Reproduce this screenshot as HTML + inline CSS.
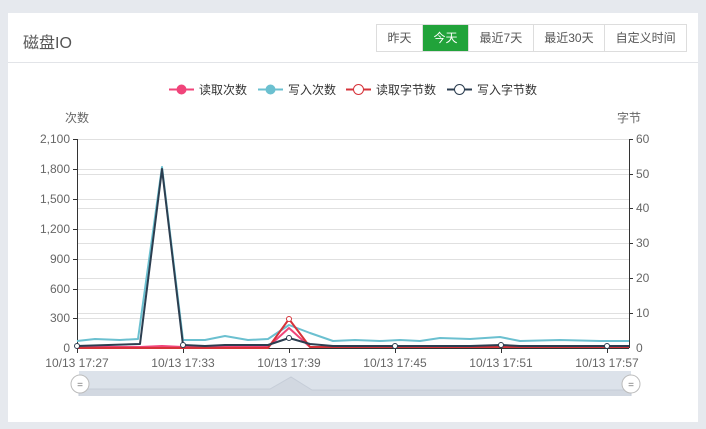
<!DOCTYPE html><html><head><meta charset="utf-8"><style>
body{margin:0;width:706px;height:429px;background:#e6e9ee;font-family:"Liberation Sans","Noto Sans CJK SC",sans-serif;position:relative;overflow:hidden}
.card{position:absolute;left:8px;top:13px;width:690px;height:409px;background:#fff}
.title{position:absolute;left:15px;top:16px;font-size:16px;color:#555}
.hr{position:absolute;left:0;top:49px;width:690px;height:1px;background:#e2e4e8}
.btns{position:absolute;left:368px;top:11px;display:flex;border:1px solid #ddd;height:26px}
.btns div{font-size:12px;color:#555;line-height:26px;padding:0 10.5px;border-left:1px solid #ddd}
.btns div:first-child{border-left:none}
.btns .on{background:#21a33a;color:#fff}
svg{position:absolute;left:0;top:0}
</style></head><body>
<div class="card"><div class="title">磁盘IO</div><div class="hr"></div>
<div class="btns"><div>昨天</div><div class="on">今天</div><div>最近7天</div><div>最近30天</div><div>自定义时间</div></div></div>
<svg width="706" height="429" font-family="Liberation Sans,Noto Sans CJK SC,sans-serif" font-size="12" fill="#666">
<g stroke="#e0e0e0" stroke-width="1">
<line x1="77" x2="629" y1="139.5" y2="139.5"/><line x1="77" x2="629" y1="169.5" y2="169.5"/><line x1="77" x2="629" y1="199.5" y2="199.5"/><line x1="77" x2="629" y1="229.5" y2="229.5"/><line x1="77" x2="629" y1="259.5" y2="259.5"/><line x1="77" x2="629" y1="289.5" y2="289.5"/><line x1="77" x2="629" y1="318.5" y2="318.5"/>
<line x1="77" x2="629" y1="174.5" y2="174.5"/><line x1="77" x2="629" y1="208.5" y2="208.5"/><line x1="77" x2="629" y1="243.5" y2="243.5"/><line x1="77" x2="629" y1="278.5" y2="278.5"/><line x1="77" x2="629" y1="313.5" y2="313.5"/>
</g>
<g stroke="#333" stroke-width="1"><line x1="77.5" x2="77.5" y1="139" y2="348"/><line x1="629.5" x2="629.5" y1="139" y2="348"/><line x1="77" x2="629" y1="348.5" y2="348.5"/>
<line x1="73" x2="77" y1="139.5" y2="139.5"/><line x1="73" x2="77" y1="169.5" y2="169.5"/><line x1="73" x2="77" y1="199.5" y2="199.5"/><line x1="73" x2="77" y1="229.5" y2="229.5"/><line x1="73" x2="77" y1="259.5" y2="259.5"/><line x1="73" x2="77" y1="289.5" y2="289.5"/><line x1="73" x2="77" y1="318.5" y2="318.5"/>
<line x1="629" x2="633" y1="139.5" y2="139.5"/><line x1="629" x2="633" y1="174.5" y2="174.5"/><line x1="629" x2="633" y1="208.5" y2="208.5"/><line x1="629" x2="633" y1="243.5" y2="243.5"/><line x1="629" x2="633" y1="278.5" y2="278.5"/><line x1="629" x2="633" y1="313.5" y2="313.5"/>
<line x1="77.5" x2="77.5" y1="348" y2="353"/><line x1="183.5" x2="183.5" y1="348" y2="353"/><line x1="289.5" x2="289.5" y1="348" y2="353"/><line x1="395.5" x2="395.5" y1="348" y2="353"/><line x1="501.5" x2="501.5" y1="348" y2="353"/><line x1="607.5" x2="607.5" y1="348" y2="353"/></g>
<g text-anchor="end"><text x="70" y="143">2,100</text><text x="70" y="173">1,800</text><text x="70" y="203">1,500</text><text x="70" y="233">1,200</text><text x="70" y="263">900</text><text x="70" y="293">600</text><text x="70" y="322">300</text><text x="70" y="352">0</text></g>
<g><text x="636" y="143">60</text><text x="636" y="178">50</text><text x="636" y="212">40</text><text x="636" y="247">30</text><text x="636" y="282">20</text><text x="636" y="317">10</text><text x="636" y="352">0</text></g>
<text x="65" y="122">次数</text><text x="617" y="122">字节</text>
<g text-anchor="middle"><text x="77" y="367">10/13 17:27</text><text x="183" y="367">10/13 17:33</text><text x="289" y="367">10/13 17:39</text><text x="395" y="367">10/13 17:45</text><text x="501" y="367">10/13 17:51</text><text x="607" y="367">10/13 17:57</text></g>
<g fill="none" stroke-width="2" stroke-linejoin="round">
<polyline stroke="#6bc0d0" points="77,341 95,339 120,340 138,339 162,167 183,340 205,340 225,336 248,340 268,339 289,325 310,333 333,341 355,340 380,341 400,340 420,341 440,338 470,339 500,337 520,341 560,340 600,341 629,341"/>
<polyline stroke="#f0447a" points="77,347 140,347 162,346 183,347 268,347 289,328 310,347 629,347"/>
<polyline stroke="#d6333a" points="77,348 268,348 289,319 310,347 629,347"/>
<polyline stroke="#2c3e50" points="77,346 140,344 162,169 183,345 205,346 225,345 268,345 289,338 310,344 333,346 395,346 470,346 501,345 520,346 629,346"/>
</g>
<g fill="#fff" stroke-width="1"><circle cx="289" cy="319" r="2.5" stroke="#d6333a"/><circle cx="289" cy="338" r="2.5" stroke="#2c3e50"/>
<circle cx="77" cy="346" r="2.5" stroke="#2c3e50"/><circle cx="183" cy="345" r="2.5" stroke="#2c3e50"/><circle cx="395" cy="346" r="2.5" stroke="#2c3e50"/><circle cx="501" cy="345" r="2.5" stroke="#2c3e50"/><circle cx="607" cy="346" r="2.5" stroke="#2c3e50"/></g>
<rect x="79" y="371" width="552" height="25" fill="#dce2ea"/>
<polyline fill="#d2d8e1" stroke="#c6cdd8" points="79,396 79,389 270,389 291,377 312,390 631,390 631,396"/>
<g><circle cx="80" cy="384" r="9" fill="#fff" stroke="#bbb"/><text x="80" y="388" text-anchor="middle" font-size="10" fill="#777">=</text>
<circle cx="631" cy="384" r="9" fill="#fff" stroke="#bbb"/><text x="631" y="388" text-anchor="middle" font-size="10" fill="#777">=</text></g>
<g font-size="12" fill="#333">
<line x1="169" x2="194" y1="89.5" y2="89.5" stroke="#f0447a" stroke-width="2"/><circle cx="181.5" cy="89.5" r="5" fill="#f0447a"/><text x="199" y="94">读取次数</text>
<line x1="258" x2="283" y1="89.5" y2="89.5" stroke="#6bc0d0" stroke-width="2"/><circle cx="270.5" cy="89.5" r="5" fill="#6bc0d0"/><text x="288" y="94">写入次数</text>
<line x1="346" x2="371" y1="89.5" y2="89.5" stroke="#d6333a" stroke-width="2"/><circle cx="358.5" cy="89.5" r="5" fill="#fff" stroke="#d6333a"/><text x="376" y="94">读取字节数</text>
<line x1="447" x2="472" y1="89.5" y2="89.5" stroke="#2c3e50" stroke-width="2"/><circle cx="459.5" cy="89.5" r="5" fill="#fff" stroke="#2c3e50"/><text x="477" y="94">写入字节数</text>
</g>
</svg>
</body></html>
